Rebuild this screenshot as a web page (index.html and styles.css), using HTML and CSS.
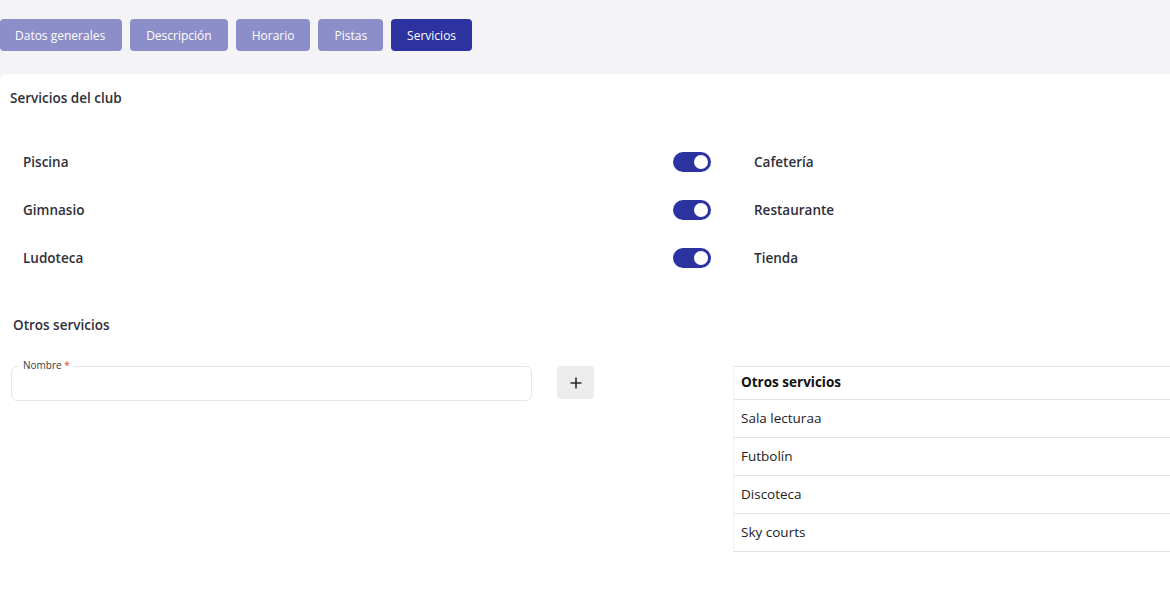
FILE: index.html
```html
<!DOCTYPE html>
<html lang="es">
<head>
<meta charset="utf-8">
<title>Servicios</title>
<link rel="stylesheet" href="styles.css">
</head>
<body>
<nav class="tabs">
  <button class="tab tab-first">Datos generales</button>
  <button class="tab">Descripción</button>
  <button class="tab">Horario</button>
  <button class="tab">Pistas</button>
  <button class="tab tab-active">Servicios</button>
</nav>
<main class="card">
  <h2 class="section-title">Servicios del club</h2>
  <div class="services">
    <div class="service"><span class="service-name">Piscina</span><span class="toggle"><span class="knob"></span></span></div>
    <div class="service"><span class="service-name">Cafetería</span><span class="toggle"><span class="knob"></span></span></div>
    <div class="service"><span class="service-name">Gimnasio</span><span class="toggle"><span class="knob"></span></span></div>
    <div class="service"><span class="service-name">Restaurante</span><span class="toggle"><span class="knob"></span></span></div>
    <div class="service"><span class="service-name">Ludoteca</span><span class="toggle"><span class="knob"></span></span></div>
    <div class="service"><span class="service-name">Tienda</span><span class="toggle"><span class="knob"></span></span></div>
  </div>
  <h2 class="section-title other-title">Otros servicios</h2>
  <div class="other">
    <div class="field">
      <label class="field-label">Nombre <span class="req">*</span></label>
      <input class="field-input" type="text">
    </div>
    <button class="add-btn" aria-label="Añadir">
      <svg width="14" height="14" viewBox="0 0 14 14"><path d="M7 1.5v11M1.5 7h11" stroke="#2b2b2b" stroke-width="1.6" fill="none"/></svg>
    </button>
    <table class="list">
      <thead><tr><th>Otros servicios</th></tr></thead>
      <tbody>
        <tr><td>Sala lecturaa</td></tr>
        <tr><td>Futbolín</td></tr>
        <tr><td>Discoteca</td></tr>
        <tr><td>Sky courts</td></tr>
      </tbody>
    </table>
  </div>
</main>
</body>
</html>
```
FILE: styles.css
```css
* { box-sizing: border-box; }
html, body { margin: 0; padding: 0; }
body {
  background: #f4f4f6;
  font-family: "Open Sans", "Noto Sans", sans-serif;
  color: #2f2f3a;
  width: 1170px;
  height: 600px;
  overflow: hidden;
}
.tabs {
  display: flex;
  gap: 8px;
  padding: 19px 0 0 0;
  height: 74px;
}
.tab {
  height: 32px;
  border: none;
  border-radius: 4px;
  background: #8b8ec8;
  color: #fff;
  font-family: inherit;
  font-size: 12px;
  padding: 0 16px;
  cursor: pointer;
}
.tab-first { padding-left: 15px; padding-right: 17px; }
.tab-active { background: #2c33a1; }
.card {
  background: #fff;
  width: 1170px;
  height: 526px;
  overflow: hidden;
  border-radius: 6px 0 0 0;
  padding: 14px 0 0 0;
}
.section-title {
  margin: 0 0 0 10px;
  font-size: 13.5px;
  font-weight: 600;
  line-height: 20px;
  color: #2f2f3a;
}
.services {
  display: grid;
  grid-template-columns: 688px 688px;
  column-gap: 43px;
  margin: 30px 0 0 23px;
}
.service {
  display: flex;
  align-items: center;
  justify-content: space-between;
  height: 48px;
}
.service-name {
  font-size: 13.5px;
  font-weight: 600;
  color: #2f2f3a;
}
.toggle {
  width: 38px;
  height: 20px;
  border-radius: 10px;
  background: #2c33a1;
  display: flex;
  align-items: center;
  justify-content: flex-end;
  padding-right: 3px;
}
.knob {
  width: 14px;
  height: 14px;
  border-radius: 50%;
  background: #fff;
}
.other-title { margin: 33px 0 0 13px; }
.other {
  display: flex;
  align-items: flex-start;
  margin: 31px 0 0 11px;
}
.field {
  position: relative;
  width: 521px;
  flex: none;
}
.field-label {
  position: absolute;
  left: 8px;
  top: -7px;
  background: #fff;
  padding: 0 4px;
  font-size: 10px;
  line-height: 12px;
  color: #3a3a3a;
}
.req { color: #e53935; }
.field-input {
  width: 521px;
  height: 35px;
  border: 1px solid #e6e6e6;
  border-radius: 6px;
  outline: none;
  background: #fff;
}
.add-btn {
  flex: none;
  width: 37px;
  height: 33px;
  margin-left: 25px;
  border: none;
  border-radius: 4px;
  background: #ececec;
  display: flex;
  align-items: center;
  justify-content: center;
  padding: 0;
}
.list {
  flex: 1;
  margin-left: 139px;
  border-collapse: collapse;
  font-size: 13.5px;
}
.list th, .list td {
  text-align: left;
  padding: 0 7px 2px;
  border-top: 1px solid #e3e3e3;
  border-left: 1px solid #f0f0f0;
  color: #222;
}
.list th {
  height: 33px;
  font-weight: 700;
  color: #111;
}
.list td {
  height: 38px;
  font-weight: 400;
}
.list tbody tr:last-child td { border-bottom: 1px solid #e3e3e3; }
```
